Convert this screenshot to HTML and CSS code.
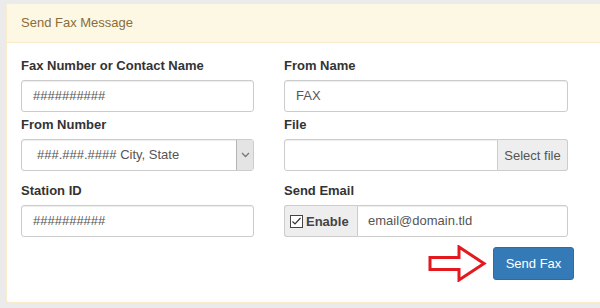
FILE: index.html
```html
<!DOCTYPE html>
<html lang="en">
<head>
    <meta charset="UTF-8">
    <meta name="viewport" content="width=device-width, initial-scale=1.0">
    <title>Send Fax Message</title>
    <link rel="stylesheet" href="styles.css">
</head>
<body>
    <div class="panel">
        <div class="panel-heading">Send Fax Message</div>
        <div class="panel-body">
            <div class="form-row first">
                <div class="form-group">
                    <label>Fax Number or Contact Name</label>
                    <div class="form-control">##########</div>
                </div>
                <div class="form-group">
                    <label>From Name</label>
                    <div class="form-control">FAX</div>
                </div>
            </div>
            <div class="form-row second">
                <div class="form-group">
                    <label>From Number</label>
                    <div class="select-box">
                        <span class="select-text">###.###.#### City, State</span>
                        <span class="select-arrow">
                            <svg width="9" height="6" viewBox="0 0 9 6"><path d="M1 1 L4.5 4.5 L8 1" fill="none" stroke="#777" stroke-width="1.3"/></svg>
                        </span>
                    </div>
                </div>
                <div class="form-group">
                    <label>File</label>
                    <div class="input-group">
                        <div class="form-control grow"></div>
                        <span class="addon addon-right">Select file</span>
                    </div>
                </div>
            </div>
            <div class="form-row third">
                <div class="form-group">
                    <label>Station ID</label>
                    <div class="form-control">##########</div>
                </div>
                <div class="form-group">
                    <label>Send Email</label>
                    <div class="input-group">
                        <span class="addon addon-left">
                            <svg class="check" width="13" height="13" viewBox="0 0 13 13"><rect x="0.5" y="0.5" width="12" height="12" fill="#fff" stroke="#444"/><path d="M2.5 6.5 L5 9 L10.5 3" fill="none" stroke="#333" stroke-width="1.2"/></svg>
                            <b>Enable</b>
                        </span>
                        <div class="form-control grow">email@domain.tld</div>
                    </div>
                </div>
            </div>
            <div class="actions">
                <svg class="arrow" width="59" height="37" viewBox="0 0 59 37"><polygon points="2,12.5 31,12.5 31,2 56,18.5 31,35 31,24.5 2,24.5" fill="#fff" stroke="#e3191f" stroke-width="3" stroke-linejoin="miter"/></svg>
                <button class="btn">Send Fax</button>
            </div>
        </div>
    </div>
</body>
</html>
```

FILE: styles.css
```css
* {
    margin: 0;
    padding: 0;
    box-sizing: border-box;
    font-family: "Liberation Sans", Arial, sans-serif;
}
body {
    background: #ebebeb;
    padding: 3px 0 0 6px;
    height: 308px;
    overflow: hidden;
    font-size: 13px;
    color: #333;
}
.panel {
    width: 600px;
    height: 300px;
    background: #fff;
    border: 1px solid #faebcc;
    border-radius: 3px;
}
.panel-heading {
    height: 39px;
    background: #fcf8e3;
    color: #8a6d3b;
    border-bottom: 1px solid #faebcc;
    padding: 0 14px;
    line-height: 37px;
    font-size: 13px;
}
.panel-body {
    padding: 14px 14px 0 14px;
}
.form-row {
    display: flex;
    gap: 30px;
}
.form-row.second {
    margin-top: 4px;
}
.form-row.third {
    margin-top: 11px;
}
.form-group:first-child {
    width: 233px;
}
.form-group:last-child {
    width: 284px;
}
label {
    display: block;
    font-weight: bold;
    line-height: 18px;
    margin-bottom: 5px;
}
.form-control {
    height: 32px;
    border: 1px solid #ccc;
    border-radius: 3px;
    padding: 0 11px;
    line-height: 30px;
    color: #555;
    background: #fff;
    box-shadow: inset 0 1px 1px rgba(0, 0, 0, 0.075);
}
.select-box {
    display: flex;
    height: 32px;
    border: 1px solid #ccc;
    border-radius: 3px;
    color: #555;
    box-shadow: inset 0 1px 1px rgba(0, 0, 0, 0.075);
}
.select-text {
    flex: 1;
    line-height: 30px;
    padding-left: 15px;
}
.select-arrow {
    width: 17px;
    background: #e4e4e4;
    border-left: 1px solid #b5b5b5;
    display: flex;
    align-items: center;
    justify-content: center;
}
.input-group {
    display: flex;
    height: 32px;
}
.grow {
    flex: 1;
}
.addon {
    display: flex;
    align-items: center;
    background: #eee;
    border: 1px solid #ccc;
    color: #555;
}
.addon-right {
    width: 70px;
    justify-content: center;
    border-left: none;
    border-radius: 0 3px 3px 0;
}
.input-group .form-control:first-child {
    border-radius: 3px 0 0 3px;
}
.addon-left {
    width: 73px;
    padding-left: 5px;
    gap: 3px;
    border-right: none;
    border-radius: 3px 0 0 3px;
}
.addon-left b {
    color: #444;
}
.addon-left + .form-control {
    border-radius: 0 3px 3px 0;
    padding-left: 10px;
}
.actions {
    width: 553px;
    display: flex;
    justify-content: flex-end;
    align-items: center;
    gap: 6px;
    margin-top: 8px;
}
.btn {
    width: 81px;
    height: 33px;
    background: #337ab7;
    border: 1px solid #2e6da4;
    border-radius: 3px;
    color: #fff;
    font-size: 13px;
    font-family: "Liberation Sans", Arial, sans-serif;
}
```
